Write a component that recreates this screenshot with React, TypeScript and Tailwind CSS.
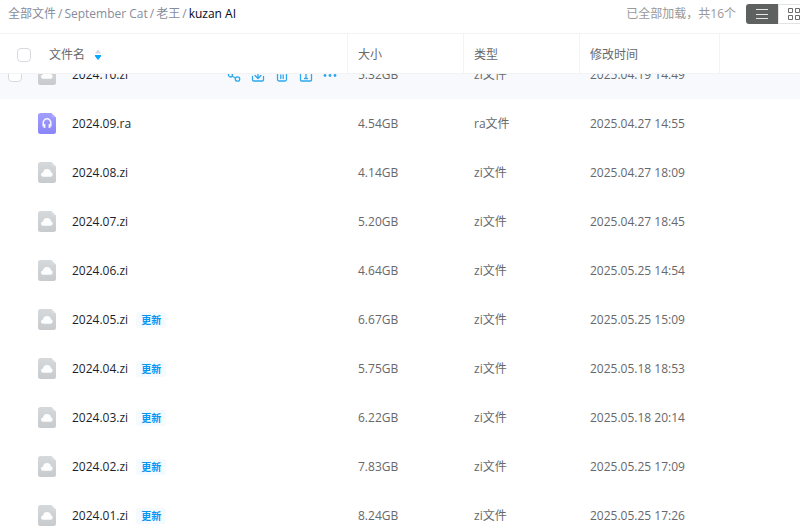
import React, { useEffect, useRef } from "react";
import { clsx } from "clsx";

type FileItem = {
  name: string;
  size: string;
  type: string;
  time: string;
  kind: "zip" | "audio";
  updated?: boolean;
  active?: boolean;
};

const files: FileItem[] = [
  { name: "2024.10.zi", size: "5.32GB", type: "zi文件", time: "2025.04.19 14:49", kind: "zip", active: true },
  { name: "2024.09.ra", size: "4.54GB", type: "ra文件", time: "2025.04.27 14:55", kind: "audio" },
  { name: "2024.08.zi", size: "4.14GB", type: "zi文件", time: "2025.04.27 18:09", kind: "zip" },
  { name: "2024.07.zi", size: "5.20GB", type: "zi文件", time: "2025.04.27 18:45", kind: "zip" },
  { name: "2024.06.zi", size: "4.64GB", type: "zi文件", time: "2025.05.25 14:54", kind: "zip" },
  { name: "2024.05.zi", size: "6.67GB", type: "zi文件", time: "2025.05.25 15:09", kind: "zip", updated: true },
  { name: "2024.04.zi", size: "5.75GB", type: "zi文件", time: "2025.05.18 18:53", kind: "zip", updated: true },
  { name: "2024.03.zi", size: "6.22GB", type: "zi文件", time: "2025.05.18 20:14", kind: "zip", updated: true },
  { name: "2024.02.zi", size: "7.83GB", type: "zi文件", time: "2025.05.25 17:09", kind: "zip", updated: true },
  { name: "2024.01.zi", size: "8.24GB", type: "zi文件", time: "2025.05.25 17:26", kind: "zip", updated: true },
];

const parents = ["全部文件", "September Cat", "老王"];

const actions = [
  {
    label: "分享",
    icon: (
      <>
        <circle cx="4.5" cy="8" r="2" />
        <circle cx="11.5" cy="12" r="2.2" />
        <circle cx="11" cy="4.5" r="1.8" />
        <path d="M6.3 9.2 9.5 11M6.3 7 9.4 5.4" />
      </>
    ),
  },
  {
    label: "下载",
    icon: <path d="M8 3v8M5 8.5l3 3 3-3M2.500 9.500v3.200c0 .9.5 1.300 1.300 1.300h8.400c.8 0 1.300-.4 1.300-1.300V9.500" />,
  },
  {
    label: "删除",
    icon: <path d="M2.500 5h11M6 5V3h4v2M3.500 5v7.500c0 1 .6 1.500 1.500 1.500h6c.9 0 1.500-.5 1.500-1.500V5M6.800 8v3.500M9.200 8v3.500" />,
  },
  {
    label: "重命名",
    icon: <path d="M5 4H3.500c-.6 0-1 .4-1 1v8c0 .6.4 1 1 1h9c.6 0 1-.4 1-1V5c0-.6-.4-1-1-1H11M8 5.500v6M6.500 11.500h3M6.500 5.500h3" />,
  },
  {
    label: "更多",
    icon: (
      <g fill="currentColor" stroke="none">
        <circle cx="3" cy="8.5" r="1.400" />
        <circle cx="8" cy="8.5" r="1.400" />
        <circle cx="13" cy="8.5" r="1.400" />
      </g>
    ),
  },
];

const FileIcon = ({ kind }: { kind: FileItem["kind"] }) => (
  <svg viewBox="0 0 18 21" className="h-[21px] w-[18px] shrink-0" aria-hidden="true">
    <defs>
      <linearGradient id="audioFill" x1="0" y1="0" x2="0" y2="1">
        <stop offset="0" stopColor="#a29eff" />
        <stop offset="1" stopColor="#8a85f8" />
      </linearGradient>
      <linearGradient id="zipFill" x1="0" y1="0" x2="0" y2="1">
        <stop offset="0" stopColor="#d6d9dc" />
        <stop offset="1" stopColor="#c8cbce" />
      </linearGradient>
    </defs>
    <path
      d="M2.500 0h11L18 4.500v14a2.500 2.500 0 0 1-2.500 2.500h-13A2.500 2.500 0 0 1 0 18.500v-16A2.500 2.500 0 0 1 2.500 0z"
      fill={kind === "audio" ? "url(#audioFill)" : "url(#zipFill)"}
    />
    <path d="M13.500 0 18 4.500h-3.200c-.8 0-1.300-.5-1.300-1.300z" fill="#fff" fillOpacity=".15" />
    {kind === "audio" ? (
      <g fill="none" stroke="#fff" strokeOpacity=".92">
        <path d="M5.200 13.500V9.600a3.800 3.800 0 0 1 7.600 0v3.900" strokeWidth="1.500" />
        <path d="M6.500 11v4M11.500 11v4" strokeWidth="1.800" />
      </g>
    ) : (
      <path
        d="M5.300 14.800a2.200 2.200 0 0 1-.3-4.400 4.100 4.100 0 0 1 8-.2A2.400 2.400 0 0 1 12.900 14.800z"
        fill="#fff"
        fillOpacity=".95"
      />
    )}
  </svg>
);

const Checkbox = ({ label }: { label: string }) => (
  <input
    type="checkbox"
    aria-label={label}
    className="size-[14px] shrink-0 appearance-none rounded-[4px] border border-[#d8d9dd] bg-white checked:bg-[#06a7ff]"
  />
);

const TopBar = () => (
  <header className="flex h-[34px] shrink-0 items-start justify-between overflow-hidden border-b border-[#f3f3f5]">
    <nav className="flex h-7 items-center gap-0.5 pl-2 text-[#878c9c]">
      {parents.map((item) => (
        <React.Fragment key={item}>
          <a href="#">{item}</a>
          <span>/</span>
        </React.Fragment>
      ))}
      <span className="text-[#03081a]">kuzan AI</span>
    </nav>
    <div className="-mr-2.5 flex h-7 items-center text-[#999]">
      <span className="mr-2.5">已全部加载，共16个</span>
      <button
        type="button"
        aria-label="列表模式"
        className="flex h-5 w-8 items-center justify-center rounded-l-[3px] bg-[#5f6160] text-[#e6e6e6]"
      >
        <svg viewBox="0 0 12 12" className="size-3" stroke="currentColor">
          <path d="M0 1.500h12M0 6.500h12M0 10.500h12" />
        </svg>
      </button>
      <button
        type="button"
        aria-label="缩略图模式"
        className="flex h-5 w-8 items-center justify-center rounded-r-[3px] border border-[#e3e3e3] bg-white text-[#6b6b6b]"
      >
        <svg viewBox="0 0 12 12" className="size-3" fill="none" stroke="currentColor">
          <path d="M.5.5h4v4h-4zM7.500.5h4v4h-4zM.5 7.500h4v4h-4zM7.500 7.500h4v4h-4z" />
        </svg>
      </button>
    </div>
  </header>
);

const FileRow = ({ file }: { file: FileItem }) => (
  <tr className={clsx("h-[49px]", file.active && "bg-[#f7f9fc]")}>
    <td className="p-0">
      <div className="flex items-center pl-2 pr-2.5">
        <div className="flex w-[30px] shrink-0">{file.active && <Checkbox label={file.name} />}</div>
        <FileIcon kind={file.kind} />
        <a href="#" className="ml-4 whitespace-nowrap text-[#1b1f2e]">
          {file.name}
        </a>
        {file.updated && (
          <span className="ml-2 rounded-[3px] bg-[#f5faff] px-[5px] text-[10px] font-bold leading-4 text-[#0596f5]">
            更新
          </span>
        )}
        {file.active && (
          <div className="ml-auto flex gap-2 text-[#2ea8ee]">
            {actions.map((action) => (
              <button key={action.label} type="button" aria-label={action.label}>
                <svg
                  viewBox="0 0 16 16"
                  className="size-4"
                  fill="none"
                  stroke="currentColor"
                  strokeWidth="1.300"
                  strokeLinecap="round"
                  strokeLinejoin="round"
                >
                  {action.icon}
                </svg>
              </button>
            ))}
          </div>
        )}
      </div>
    </td>
    <td className="px-2.5 py-0">{file.size}</td>
    <td className="px-2.5 py-0">{file.type}</td>
    <td className="whitespace-nowrap px-2.5 py-0">{file.time}</td>
    <td />
  </tr>
);

const headCell = "border-b border-r border-[#f3f3f5] px-2.5 pb-0 pt-0.5 text-left font-normal";

const App = () => {
  const listRef = useRef<HTMLDivElement>(null);

  useEffect(() => {
    if (listRef.current) listRef.current.scrollTop = 24;
  }, []);

  return (
    <div className="flex h-screen flex-col bg-white font-['Open_Sans','Noto_Sans_CJK_SC',sans-serif] text-[12px] leading-4 text-[#66686b]">
      <TopBar />
      <main ref={listRef} className="min-h-0 flex-1 overflow-y-auto [scrollbar-width:none]">
        <table className="w-full table-fixed border-separate border-spacing-0">
          <colgroup>
            <col />
            <col className="w-[116px]" />
            <col className="w-[116px]" />
            <col className="w-[140px]" />
            <col className="w-20" />
          </colgroup>
          <thead className="sticky top-0 z-10 bg-white">
            <tr className="h-10">
              <th className="border-b border-r border-[#f3f3f5] pb-0 pl-[17px] pr-0 pt-0.5 text-left font-normal">
                <div className="flex items-center">
                  <Checkbox label="全选" />
                  <span className="ml-[18px]">文件名</span>
                  <svg viewBox="0 0 6 12" className="ml-2.5 h-3 w-1.5" aria-hidden="true">
                    <path d="M3 0.500 6 4.500H0z" fill="#d4d7de" />
                    <path d="M0 6.500h6L3 10.500z" fill="#06a7ff" stroke="#06a7ff" strokeWidth="1" strokeLinejoin="round" />
                  </svg>
                </div>
              </th>
              <th className={headCell}>大小</th>
              <th className={headCell}>类型</th>
              <th className={headCell}>修改时间</th>
              <th className="border-b border-[#f3f3f5]" />
            </tr>
          </thead>
          <tbody>
            {files.map((file) => (
              <FileRow key={file.name} file={file} />
            ))}
          </tbody>
        </table>
      </main>
    </div>
  );
};

export default App;
